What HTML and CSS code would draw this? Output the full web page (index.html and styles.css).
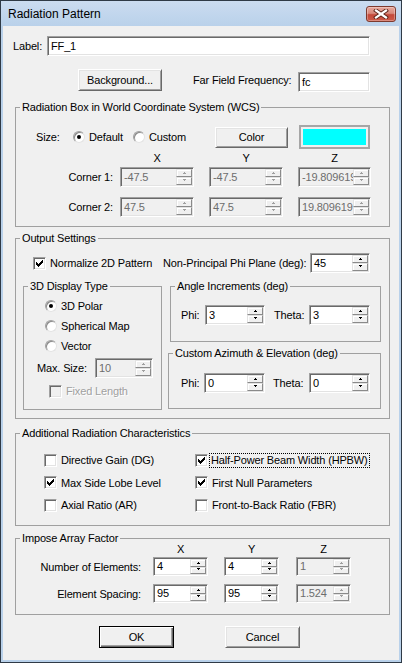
FILE: index.html
```html
<!DOCTYPE html>
<html>
<head>
<meta charset="utf-8">
<title>Radiation Pattern</title>
<link rel="stylesheet" href="styles.css">
</head>
<body>
<div class="window">
  <div class="titlebar">
    <span class="title">Radiation Pattern</span>
    <div class="close">
      <svg width="16" height="10" viewBox="0 0 16 10">
        <path d="M3 1.5 L13 8.5 M13 1.5 L3 8.5" stroke="#5b2318" stroke-width="4" stroke-linecap="square" fill="none"/>
        <path d="M3 1.5 L13 8.5 M13 1.5 L3 8.5" stroke="#ffffff" stroke-width="2.2" stroke-linecap="square" fill="none"/>
      </svg>
    </div>
  </div>
  <div class="frame">
    <div class="client">
      <div class="row row-label">
        <span class="lbl w-label">Label:</span>
        <div class="edit e-label"><span class="val">FF_1</span></div>
      </div>
      <div class="row row-bg">
        <div class="btn b-bg">Background...</div>
        <span class="lbl l-freq">Far Field Frequency:</span>
        <div class="edit e-freq"><span class="val">fc</span></div>
      </div>

      <fieldset class="group g-wcs">
        <legend>Radiation Box in World Coordinate System (WCS)</legend>
        <div class="row size-row">
          <span class="lbl w-size">Size:</span>
          <div class="opt w-default"><span class="radio on"></span>Default</div>
          <div class="opt w-custom"><span class="radio"></span>Custom</div>
          <div class="btn b-color">Color</div>
          <div class="swatch"><div class="swatch-fill"></div></div>
        </div>
        <div class="row hdr-wcs">
          <span class="h74">X</span><span class="h74">Y</span><span class="h73">Z</span>
        </div>
        <div class="row corner c1">
          <span class="lbl l-corner">Corner 1:</span>
          <div class="spin dis w74 mr15"><span class="val">-47.5</span><span class="arrows"><span class="up"></span><span class="dn"></span></span></div>
          <div class="spin dis w74 mr15"><span class="val">-47.5</span><span class="arrows"><span class="up"></span><span class="dn"></span></span></div>
          <div class="spin dis w73"><span class="val">-19.809619</span><span class="arrows"><span class="up"></span><span class="dn"></span></span></div>
        </div>
        <div class="row corner c2">
          <span class="lbl l-corner">Corner 2:</span>
          <div class="spin dis w74 mr15"><span class="val">47.5</span><span class="arrows"><span class="up"></span><span class="dn"></span></span></div>
          <div class="spin dis w74 mr15"><span class="val">47.5</span><span class="arrows"><span class="up"></span><span class="dn"></span></span></div>
          <div class="spin dis w73"><span class="val">19.809619</span><span class="arrows"><span class="up"></span><span class="dn"></span></span></div>
        </div>
      </fieldset>

      <fieldset class="group g-out">
        <legend>Output Settings</legend>
        <div class="row norm-row">
          <div class="opt w-norm"><span class="check"><svg width="7" height="7" viewBox="0 0 7 7"><g fill="#000"><rect x="0" y="2" width="1" height="3"/><rect x="1" y="3" width="1" height="3"/><rect x="2" y="4" width="1" height="3"/><rect x="3" y="3" width="1" height="3"/><rect x="4" y="2" width="1" height="3"/><rect x="5" y="1" width="1" height="3"/><rect x="6" y="0" width="1" height="3"/></g></svg></span>Normalize 2D Pattern</div>
          <span class="lbl w-npp">Non-Principal Phi Plane (deg):</span>
          <div class="spin w60"><span class="val">45</span><span class="arrows"><span class="up"></span><span class="dn"></span></span></div>
        </div>
        <div class="cols">
          <fieldset class="group sub g-3d">
            <legend>3D Display Type</legend>
            <div class="row radio-row first"><span class="radio on"></span>3D Polar</div>
            <div class="row radio-row"><span class="radio"></span>Spherical Map</div>
            <div class="row radio-row"><span class="radio"></span>Vector</div>
            <div class="row max-row">
              <span class="lbl w-max">Max. Size:</span>
              <div class="spin dis w58"><span class="val">10</span><span class="arrows"><span class="up"></span><span class="dn"></span></span></div>
            </div>
            <div class="row fixed-row">
              <span class="check dis"></span><span class="distext">Fixed Length</span>
            </div>
          </fieldset>
          <div class="rcol">
            <fieldset class="group sub g-ang">
              <legend>Angle Increments (deg)</legend>
              <div class="row pt-row">
                <span class="lbl w24">Phi:</span>
                <div class="spin w60 mr9"><span class="val">3</span><span class="arrows"><span class="up"></span><span class="dn"></span></span></div>
                <span class="lbl w35">Theta:</span>
                <div class="spin w61"><span class="val">3</span><span class="arrows"><span class="up"></span><span class="dn"></span></span></div>
              </div>
            </fieldset>
            <fieldset class="group sub g-az">
              <legend>Custom Azimuth &amp; Elevation (deg)</legend>
              <div class="row pt-row az">
                <span class="lbl w23">Phi:</span>
                <div class="spin w61 mr8"><span class="val">0</span><span class="arrows"><span class="up"></span><span class="dn"></span></span></div>
                <span class="lbl w36">Theta:</span>
                <div class="spin w61"><span class="val">0</span><span class="arrows"><span class="up"></span><span class="dn"></span></span></div>
              </div>
            </fieldset>
          </div>
        </div>
      </fieldset>

      <fieldset class="group g-add">
        <legend>Additional Radiation Characteristics</legend>
        <div class="add-grid">
          <div class="opt"><span class="check"></span>Directive Gain (DG)</div>
          <div class="opt"><span class="check"><svg width="7" height="7" viewBox="0 0 7 7"><g fill="#000"><rect x="0" y="2" width="1" height="3"/><rect x="1" y="3" width="1" height="3"/><rect x="2" y="4" width="1" height="3"/><rect x="3" y="3" width="1" height="3"/><rect x="4" y="2" width="1" height="3"/><rect x="5" y="1" width="1" height="3"/><rect x="6" y="0" width="1" height="3"/></g></svg></span><span class="focus">Half-Power Beam Width (HPBW)</span></div>
          <div class="opt"><span class="check"><svg width="7" height="7" viewBox="0 0 7 7"><g fill="#000"><rect x="0" y="2" width="1" height="3"/><rect x="1" y="3" width="1" height="3"/><rect x="2" y="4" width="1" height="3"/><rect x="3" y="3" width="1" height="3"/><rect x="4" y="2" width="1" height="3"/><rect x="5" y="1" width="1" height="3"/><rect x="6" y="0" width="1" height="3"/></g></svg></span>Max Side Lobe Level</div>
          <div class="opt"><span class="check"><svg width="7" height="7" viewBox="0 0 7 7"><g fill="#000"><rect x="0" y="2" width="1" height="3"/><rect x="1" y="3" width="1" height="3"/><rect x="2" y="4" width="1" height="3"/><rect x="3" y="3" width="1" height="3"/><rect x="4" y="2" width="1" height="3"/><rect x="5" y="1" width="1" height="3"/><rect x="6" y="0" width="1" height="3"/></g></svg></span>First Null Parameters</div>
          <div class="opt"><span class="check"></span>Axial Ratio (AR)</div>
          <div class="opt"><span class="check"></span>Front-to-Back Ratio (FBR)</div>
        </div>
      </fieldset>

      <fieldset class="group g-arr">
        <legend>Impose Array Factor</legend>
        <div class="row hdr-arr">
          <span class="h55 mr16">X</span><span class="h55 mr17">Y</span><span class="h55">Z</span>
        </div>
        <div class="row arr-row n1">
          <span class="lbl l-arr">Number of Elements:</span>
          <div class="spin w55 h19 mr16"><span class="val">4</span><span class="arrows"><span class="up"></span><span class="dn"></span></span></div>
          <div class="spin w55 h19 mr17"><span class="val">4</span><span class="arrows"><span class="up"></span><span class="dn"></span></span></div>
          <div class="spin dis w55 h19"><span class="val">1</span><span class="arrows"><span class="up"></span><span class="dn"></span></span></div>
        </div>
        <div class="row arr-row n2">
          <span class="lbl l-arr">Element Spacing:</span>
          <div class="spin w55 h19 mr16"><span class="val">95</span><span class="arrows"><span class="up"></span><span class="dn"></span></span></div>
          <div class="spin w55 h19 mr17"><span class="val">95</span><span class="arrows"><span class="up"></span><span class="dn"></span></span></div>
          <div class="spin dis w55 h19"><span class="val">1.524</span><span class="arrows"><span class="up"></span><span class="dn"></span></span></div>
        </div>
      </fieldset>

      <div class="row btn-row">
        <div class="btn default b-ok">OK</div>
        <div class="btn b-cancel">Cancel</div>
      </div>
    </div>
  </div>
</div>
</body>
</html>
```

FILE: styles.css
```css
html, body {
  margin: 0;
  padding: 0;
}
body {
  width: 402px;
  height: 663px;
  overflow: hidden;
  font-family: "Liberation Sans", Arial, sans-serif;
  font-size: 11px;
  color: #000;
  background: #f0f0f0;
}
.window {
  box-sizing: border-box;
  width: 402px;
  height: 663px;
  border: 1px solid #2f3a46;
  background: #b9d1ea;
  display: flex;
  flex-direction: column;
}
.titlebar {
  flex: none;
  height: 25px;
  display: flex;
  align-items: center;
  padding: 0 5px 0 7px;
  background: linear-gradient(#cbdcf0, #b9d1ea);
}
.title {
  flex: 1;
  font-size: 12px;
  color: #000;
}
.close {
  box-sizing: border-box;
  width: 30px;
  height: 16px;
  border: 1px solid #7e3a2e;
  border-radius: 3px;
  background: linear-gradient(#e7a89c 0%, #d98a7c 45%, #c4493a 55%, #cd5a48 100%);
  box-shadow: inset 0 0 0 1px rgba(255,255,255,0.3);
  display: flex;
  align-items: center;
  justify-content: center;
}
.frame {
  flex: 1;
  display: flex;
  padding: 0 2px 2px 2px;
}
.client {
  flex: 1;
  background: #f0f0f0;
  display: flex;
  flex-direction: column;
  align-items: flex-start;
  letter-spacing: -0.15px;
}
.row {
  display: flex;
  align-items: center;
  flex: none;
}
.lbl { flex: none; white-space: nowrap; }

/* top rows */
.row-label { margin: 10px 0 0 10px; height: 20px; }
.w-label { width: 34px; }
.e-label { width: 323px; height: 20px; }
.row-bg { margin: 13px 0 0 75px; height: 23px; align-items: flex-start; }
.b-bg { width: 84px; height: 22px; }
.l-freq { margin-left: 31px; width: 105px; line-height: 23px; }
.e-freq { width: 72px; height: 20px; margin-top: 3px; }

/* edits */
.edit, .spin {
  box-sizing: border-box;
  padding: 1px;
  border: 1px solid;
  border-color: #a0a0a0 #ffffff #ffffff #a0a0a0;
  box-shadow: inset 1px 1px 0 #696969, inset -1px -1px 0 #e3e3e3;
  background: #fff;
  display: flex;
  overflow: hidden;
  flex: none;
  height: 20px;
}
.val {
  flex: 1;
  min-width: 0;
  overflow: hidden;
  white-space: nowrap;
  padding-left: 2px;
  line-height: 16px;
}
.h19 { height: 19px; }
.h19 .val { line-height: 15px; }
.spin.dis { background: #f0f0f0; }
.spin.dis .val { color: #6d6d6d; }
.arrows {
  flex: none;
  width: 16px;
  display: flex;
  flex-direction: column;
}
.up, .dn {
  flex: 1;
  box-sizing: border-box;
  border: 1px solid;
  border-color: #e3e3e3 #8a8a8a #8a8a8a #e3e3e3;
  box-shadow: inset 1px 1px 0 #fff;
  background: #f0f0f0;
  display: flex;
  align-items: center;
  justify-content: center;
}
.up::after {
  content: "";
  width: 1px;
  height: 1px;
  margin-top: -1px;
  background: #000;
  box-shadow: -1px 1px 0 #000, 0 1px 0 #000, 1px 1px 0 #000;
}
.dn::after {
  content: "";
  width: 1px;
  height: 1px;
  margin-top: -1px;
  background: #000;
  box-shadow: -1px -1px 0 #000, 0 -1px 0 #000, 1px -1px 0 #000;
}
.dis .up::after, .dis .dn::after { background: #a0a0a0; }
.dis .up::after { box-shadow: -1px 1px 0 #a0a0a0, 0 1px 0 #a0a0a0, 1px 1px 0 #a0a0a0; }
.dis .dn::after { box-shadow: -1px -1px 0 #a0a0a0, 0 -1px 0 #a0a0a0, 1px -1px 0 #a0a0a0; }

.w74 { width: 74px; }
.w73 { width: 73px; }
.w61 { width: 61px; }
.w60 { width: 60px; }
.w58 { width: 58px; }
.w55 { width: 55px; }
.mr8 { margin-right: 8px; }
.mr9 { margin-right: 9px; }
.mr15 { margin-right: 15px; }
.mr16 { margin-right: 16px; }
.mr17 { margin-right: 17px; }

/* buttons */
.btn {
  box-sizing: border-box;
  flex: none;
  background: #f0f0f0;
  border: 1px solid;
  border-color: #ffffff #696969 #696969 #ffffff;
  box-shadow: inset 1px 1px 0 #e3e3e3, inset -1px -1px 0 #a0a0a0;
  display: flex;
  align-items: center;
  justify-content: center;
  white-space: nowrap;
}
.btn.default {
  border-color: #000;
  box-shadow: inset 1px 1px 0 #fff, inset -1px -1px 0 #696969, inset -2px -2px 0 #a0a0a0;
}

/* radio & check */
.opt {
  display: flex;
  align-items: center;
  flex: none;
  white-space: nowrap;
}
.radio {
  box-sizing: border-box;
  flex: none;
  width: 12px;
  height: 12px;
  border-radius: 50%;
  border: 1px solid;
  border-color: #a0a0a0 #e3e3e3 #e3e3e3 #a0a0a0;
  box-shadow: inset 1px 1px 0 #8a8a8a;
  background: #fff;
  display: flex;
  align-items: center;
  justify-content: center;
  margin-right: 4px;
}
.radio.on::after {
  content: "";
  width: 4px;
  height: 4px;
  border-radius: 50%;
  background: #000;
}
.check {
  box-sizing: border-box;
  flex: none;
  width: 13px;
  height: 13px;
  border: 1px solid;
  border-color: #a0a0a0 #ffffff #ffffff #a0a0a0;
  box-shadow: inset 1px 1px 0 #696969, inset -1px -1px 0 #e3e3e3;
  background: #fff;
  display: flex;
  align-items: center;
  justify-content: center;
  margin-right: 4px;
}
.check svg { display: block; }
.check.dis { background: #f0f0f0; }
.distext { color: #a0a0a0; text-shadow: 1px 1px 0 #fff; }

/* group boxes */
fieldset.group {
  box-sizing: border-box;
  margin: 0 0 0 12px;
  padding: 0;
  border: 1px solid #a0a0a0;
  width: 375px;
  min-width: 0;
  flex: none;
}
fieldset.group legend {
  padding: 0 2px;
  margin-left: 4px;
  line-height: 13px;
  font-size: 11px;
}
fieldset.sub { margin: 0; }

.g-wcs { margin-top: 9px !important; height: 126px; }
.size-row { margin-top: 11px; height: 24px; padding-left: 20px; }
.w-size { width: 37px; }
.w-default { width: 60px; }
.w-custom { width: 82px; }
.b-color { width: 73px; height: 21px; }
.swatch {
  box-sizing: border-box;
  margin-left: 11px;
  width: 71px;
  height: 24px;
  border: 2px solid #a6a6a6;
  padding: 2px;
  flex: none;
}
.swatch-fill { width: 100%; height: 100%; background: #00ffff; }
.hdr-wcs { margin-top: 3px; height: 13px; line-height: 13px; padding-left: 104px; }
.h74 { width: 74px; margin-right: 15px; text-align: center; }
.h73 { width: 73px; text-align: center; }
.c1 { margin-top: 2px; height: 20px; }
.c2 { margin-top: 10px; height: 20px; }
.l-corner { width: 97px; margin-right: 7px; text-align: right; }

.g-out { margin-top: 5px !important; height: 187px; }
.norm-row { margin-top: 8px; height: 20px; padding-left: 17px; }
.w-norm { width: 130px; }
.w-npp { width: 147px; }
.cols { display: flex; align-items: flex-start; margin-top: 7px; padding-left: 7px; }
.g-3d { width: 139px !important; height: 130px; }
.rcol { display: flex; flex-direction: column; align-items: flex-start; margin-left: 6px; }
.g-ang { width: 211px !important; height: 62px; margin-left: 2px !important; }
.g-az { width: 213px !important; height: 62px; margin-top: 5px !important; }
.radio-row { height: 20px; padding-left: 21px; white-space: nowrap; }
.radio-row.first { margin-top: 3px; }
.max-row { margin-top: 2px; height: 20px; padding-left: 13px; }
.w-max { width: 58px; }
.fixed-row { margin-top: 4px; height: 18px; padding-left: 25px; }
.pt-row { margin-top: 12px; height: 20px; padding-left: 10px; }
.pt-row.az { margin-top: 13px; padding-left: 12px; }
.w23 { width: 23px; }
.w24 { width: 24px; }
.w35 { width: 35px; }
.w36 { width: 36px; }

.g-add { margin-top: 8px !important; height: 99px; }
.add-grid {
  display: grid;
  grid-template-columns: 151px auto;
  grid-auto-rows: 22.5px;
  align-items: center;
  margin-top: 9px;
  padding-left: 28px;
}
.focus {
  outline: 1px dotted #000;
  outline-offset: 0;
  padding: 0 1px;
  margin-left: -2px;
  line-height: 13px;
}

.g-arr { margin-top: 6px !important; height: 83px; }
.hdr-arr { margin-top: -2px; height: 12px; line-height: 12px; padding-left: 137px; }
.h55 { width: 55px; text-align: center; }
.arr-row { height: 19px; }
.n1 { margin-top: 2px; }
.n2 { margin-top: 8px; }
.l-arr { width: 125px; margin-right: 12px; text-align: right; }

.btn-row { margin: 11px 0 0 96px; height: 22px; }
.b-ok { width: 75px; height: 22px; }
.b-cancel { width: 75px; height: 22px; margin-left: 51px; }
```
